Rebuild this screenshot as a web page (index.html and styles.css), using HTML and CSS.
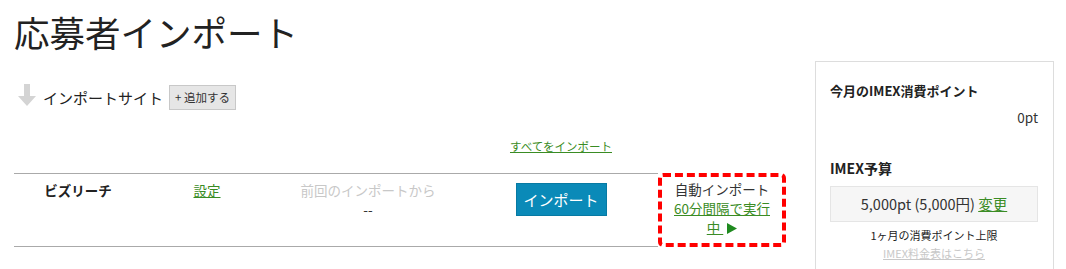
FILE: index.html
```html
<!DOCTYPE html>
<html lang="ja">
<head>
    <meta charset="UTF-8">
    <meta name="viewport" content="width=device-width, initial-scale=1.0">
    <title>応募者インポート</title>
    <link rel="stylesheet" href="styles.css">
</head>
<body>
    <div class="page">
        <div class="main">
            <h1>応募者インポート</h1>

            <div class="site-head">
                <svg class="arrow" width="20" height="22" viewBox="0 0 20 22">
                    <path d="M7 0h6v12h6l-9 10-9-10h6z" fill="#d4d4d4"/>
                </svg>
                <span class="site-label">インポートサイト</span>
                <button class="add-btn">+ 追加する</button>
            </div>

            <table class="sites">
                <tr class="head-row">
                    <td class="c-name"></td>
                    <td class="c-set"></td>
                    <td class="c-last"></td>
                    <td class="c-imp"><a href="#">すべてをインポート</a></td>
                    <td class="c-auto-head"></td>
                </tr>
                <tr class="site-row">
                    <td class="c-name"><b>ビズリーチ</b></td>
                    <td class="c-set"><a href="#">設定</a></td>
                    <td class="c-last">
                        <span class="muted">前回のインポートから</span><br>
                        --
                    </td>
                    <td class="c-imp"><button class="import-btn">インポート</button></td>
                    <td class="c-auto">
                        自動インポート<br>
                        <a href="#">60分間隔で実行中 <svg class="tri" width="10" height="11" viewBox="0 0 10 11"><path d="M0 0l10 5.5-10 5.5z" fill="#1f8a1f"/></svg></a>
                    </td>
                </tr>
            </table>
        </div>

        <div class="side">
            <div class="side-title">今月のIMEX消費ポイント</div>
            <div class="side-value">0pt</div>

            <div class="budget-title">IMEX予算</div>
            <div class="budget-box">5,000pt (5,000円) <a href="#">変更</a></div>
            <div class="budget-note">1ヶ月の消費ポイント上限</div>
            <div class="budget-link"><a href="#">IMEX料金表はこちら</a></div>
        </div>
    </div>
</body>
</html>
```

FILE: styles.css
```css
/* page frame */
body {
    margin: 0;
    font-family: "Noto Sans CJK JP", "Noto Sans", sans-serif;
    color: #333;
    background: #fff;
    overflow: hidden;
}
a {
    color: #3a8c24;
}
.page {
    display: flex;
    padding-left: 14px;
}
.main {
    width: 786px;
}
h1 {
    margin: 11px 0 0;
    font-size: 35.5px;
    line-height: 42px;
    font-weight: normal;
    color: #222;
}

/* import site header */
.site-head {
    display: flex;
    align-items: center;
    height: 26px;
    margin-top: 31px;
}
.arrow {
    margin-left: 3px;
    margin-right: 6px;
    margin-top: -4px;
}
.site-label {
    font-size: 15px;
    color: #222;
}
.add-btn {
    margin-left: 6px;
    height: 25px;
    padding: 0 5px;
    font-family: inherit;
    font-size: 11.5px;
    color: #333;
    background: #e6e6e6;
    border: 1px solid #c8c8c8;
    border-radius: 0;
}

/* site table */
.sites {
    width: 772px;
    margin-top: 20px;
    border-collapse: separate;
    border-spacing: 0;
    table-layout: fixed;
    font-size: 13.5px;
    line-height: 19px;
}
.sites td {
    text-align: center;
    vertical-align: top;
    padding: 0;
}
.c-name { width: 128px; }
.c-set { width: 130px; }
.c-last { width: 192px; }
.c-imp { width: 194px; }
.head-row td {
    height: 43px;
    vertical-align: bottom;
    padding-bottom: 17px;
    box-sizing: border-box;
    font-size: 11.5px;
}
.site-row td {
    height: 74px;
    padding-top: 7px;
    border-top: 1px solid #aaa;
    border-bottom: 1px solid #aaa;
    box-sizing: border-box;
}
.site-row .c-name b {
    color: #222;
}
.muted {
    color: #c8c8c8;
}
.import-btn {
    margin-top: 2px;
    height: 33px;
    width: 91px;
    font-family: inherit;
    font-size: 15px;
    color: #fff;
    background: #0a8ab8;
    border: 1px solid #077aa3;
    border-radius: 0;
}
.site-row .c-auto {
    border: 4px dashed #f00;
    border-radius: 5px;
    padding: 3px 6px 0;
    color: #333;
}
.tri {
    margin-left: 4px;
    vertical-align: -1px;
}

/* right column */
.side {
    width: 239px;
    height: 210px;
    margin-top: 61px;
    margin-left: 15px;
    border: 1px solid #ddd;
    box-sizing: border-box;
    padding: 19px 15px 0 14px;
}
.side-title {
    font-size: 13px;
    font-weight: bold;
    color: #222;
    line-height: 20px;
}
.side-value {
    text-align: right;
    font-size: 13.5px;
    line-height: 20px;
    margin-top: 6px;
}
.budget-title {
    margin-top: 31px;
    font-size: 14px;
    font-weight: bold;
    color: #222;
    line-height: 20px;
}
.budget-box {
    margin-top: 8px;
    height: 36px;
    line-height: 34px;
    text-align: center;
    font-size: 14.5px;
    background: #f6f6f6;
    border: 1px solid #e5e5e5;
    box-sizing: border-box;
}
.budget-note {
    margin-top: 4px;
    text-align: center;
    font-size: 11px;
    line-height: 18px;
    color: #222;
}
.budget-link {
    text-align: center;
    font-size: 11px;
    line-height: 18px;
}
.budget-link a {
    color: #c8c8c8;
}
```
